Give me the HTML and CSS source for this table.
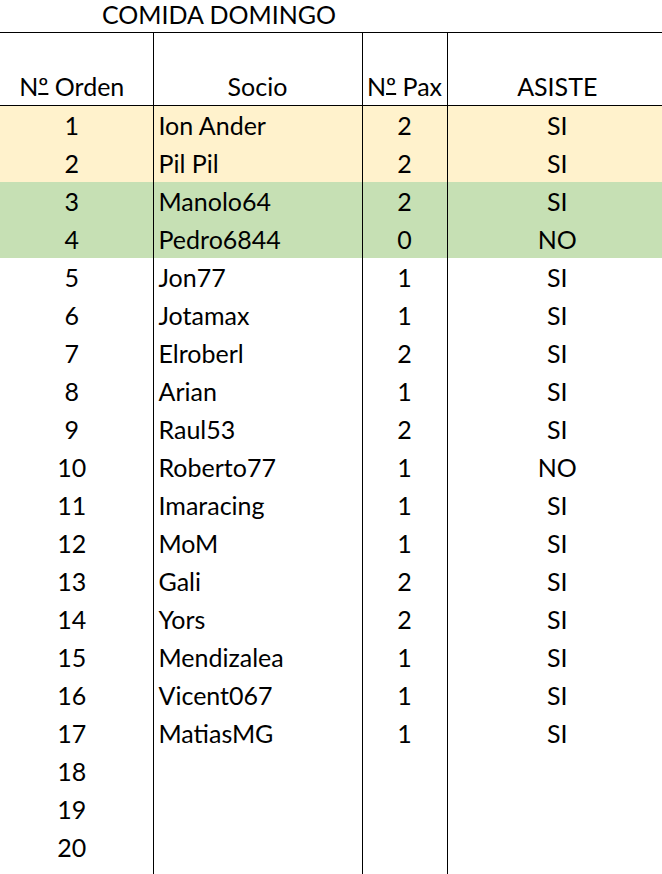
FILE: index.html
```html
<!DOCTYPE html>
<html>
<head>
    <title>Comida Domingo</title>
    <link rel="stylesheet" href="styles.css">
</head>
<body>
    <table class="sheet">
        <colgroup>
            <col class="col-orden">
            <col class="col-socio">
            <col class="col-pax">
            <col class="col-asiste">
        </colgroup>
        <tr class="title-row">
            <td colspan="3" class="title">COMIDA DOMINGO</td>
            <td></td>
        </tr>
        <tr class="head-row">
            <th class="orden">N<span class="ord">º</span> Orden</th>
            <th class="socio-head">Socio</th>
            <th class="pax">N<span class="ord">º</span> Pax</th>
            <th class="asiste">ASISTE</th>
        </tr>
        <tr class="yellow"><td class="orden">1</td><td class="socio">Ion Ander</td><td class="pax">2</td><td class="asiste">SI</td></tr>
        <tr class="yellow"><td class="orden">2</td><td class="socio">Pil Pil</td><td class="pax">2</td><td class="asiste">SI</td></tr>
        <tr class="green"><td class="orden">3</td><td class="socio">Manolo64</td><td class="pax">2</td><td class="asiste">SI</td></tr>
        <tr class="green"><td class="orden">4</td><td class="socio">Pedro6844</td><td class="pax">0</td><td class="asiste">NO</td></tr>
        <tr><td class="orden">5</td><td class="socio">Jon77</td><td class="pax">1</td><td class="asiste">SI</td></tr>
        <tr><td class="orden">6</td><td class="socio">Jotamax</td><td class="pax">1</td><td class="asiste">SI</td></tr>
        <tr><td class="orden">7</td><td class="socio">Elroberl</td><td class="pax">2</td><td class="asiste">SI</td></tr>
        <tr><td class="orden">8</td><td class="socio">Arian</td><td class="pax">1</td><td class="asiste">SI</td></tr>
        <tr><td class="orden">9</td><td class="socio">Raul53</td><td class="pax">2</td><td class="asiste">SI</td></tr>
        <tr><td class="orden">10</td><td class="socio">Roberto77</td><td class="pax">1</td><td class="asiste">NO</td></tr>
        <tr><td class="orden">11</td><td class="socio">Imaracing</td><td class="pax">1</td><td class="asiste">SI</td></tr>
        <tr><td class="orden">12</td><td class="socio">MoM</td><td class="pax">1</td><td class="asiste">SI</td></tr>
        <tr><td class="orden">13</td><td class="socio">Gali</td><td class="pax">2</td><td class="asiste">SI</td></tr>
        <tr><td class="orden">14</td><td class="socio">Yors</td><td class="pax">2</td><td class="asiste">SI</td></tr>
        <tr><td class="orden">15</td><td class="socio">Mendizalea</td><td class="pax">1</td><td class="asiste">SI</td></tr>
        <tr><td class="orden">16</td><td class="socio">Vicent067</td><td class="pax">1</td><td class="asiste">SI</td></tr>
        <tr><td class="orden">17</td><td class="socio">MatiasMG</td><td class="pax">1</td><td class="asiste">SI</td></tr>
        <tr><td class="orden">18</td><td class="socio"></td><td class="pax"></td><td class="asiste"></td></tr>
        <tr><td class="orden">19</td><td class="socio"></td><td class="pax"></td><td class="asiste"></td></tr>
        <tr><td class="orden">20</td><td class="socio"></td><td class="pax"></td><td class="asiste"></td></tr>
        <tr><td class="orden"></td><td class="socio"></td><td class="pax"></td><td class="asiste"></td></tr>
    </table>
</body>
</html>
```

FILE: styles.css
```css
body {
    margin: 0;
    padding: 0;
    background-color: #fff;
    font-family: Lato, "Open Sans", sans-serif;
    font-size: 25px;
    color: #000;
    overflow: hidden;
}

.sheet {
    width: 662px;
    border-collapse: collapse;
    table-layout: fixed;
}

.col-orden { width: 153px; }
.col-socio { width: 209px; }
.col-pax { width: 85px; }
.col-asiste { width: 215px; }

td, th {
    padding: 0;
    height: 38px;
    line-height: 38px;
    font-weight: normal;
    white-space: nowrap;
    overflow: hidden;
    vertical-align: middle;
}

.title-row td {
    height: 32px;
    line-height: 28px;
    vertical-align: top;
}

.title {
    text-align: center;
    padding-right: 9px;
}

.head-row th {
    height: 72px;
    vertical-align: bottom;
    border-top: 1px solid #000;
    border-bottom: 1px solid #000;
}

/* the little underlined "o" of Nº */
.ord {
    text-decoration: underline;
    text-decoration-thickness: 2px;
    text-underline-offset: -3px;
}

.orden {
    text-align: center;
    padding-right: 9px;
}

.socio {
    text-align: left;
    padding-left: 5px;
    border-left: 1px solid #000;
}

.socio-head {
    text-align: center;
    border-left: 1px solid #000;
}

.pax {
    text-align: center;
    border-left: 1px solid #000;
}

.asiste {
    text-align: center;
    padding-left: 5px;
    border-left: 1px solid #000;
}

.yellow td { background-color: #fff2cc; }
.green td { background-color: #c6e0b4; }
```
